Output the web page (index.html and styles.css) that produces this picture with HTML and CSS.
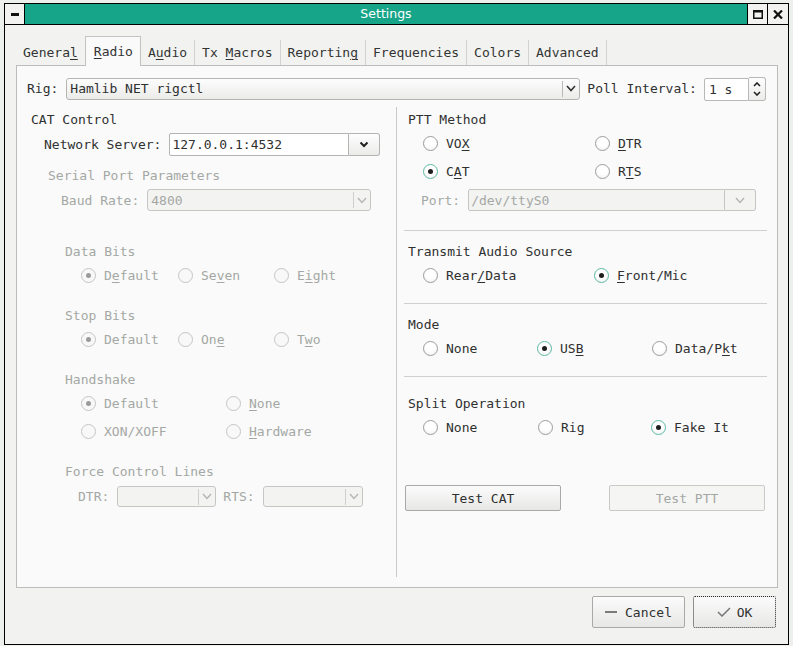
FILE: index.html
```html
<!DOCTYPE html>
<html>
<head>
<meta charset="utf-8">
<title>Settings</title>
<link rel="stylesheet" href="styles.css">
</head>
<body>
<div class="window">
  <div class="titlebar">
    <div class="tbtn tmin"><span class="dash"></span></div>
    <div class="title">Settings</div>
    <div class="tbtn tmax"><svg width="10" height="9" viewBox="0 0 10 9"><rect x="0.75" y="0.75" width="8.5" height="7.5" fill="none" stroke="#111" stroke-width="1.5"/><rect x="0" y="0" width="10" height="2.5" fill="#111"/></svg></div>
    <div class="tbtn tclose"><svg width="10" height="9" viewBox="0 0 10 9"><path d="M1 0.5 L9 8.5 M9 0.5 L1 8.5" stroke="#111" stroke-width="2.2"/></svg></div>
  </div>
  <div class="content">
    <div class="tabs">
      <div class="tab">Genera<u>l</u></div>
      <div class="tab active"><u>R</u>adio</div>
      <div class="tab">A<u>u</u>dio</div>
      <div class="tab">Tx <u>M</u>acros</div>
      <div class="tab">Reportin<u>g</u></div>
      <div class="tab">Frequencies</div>
      <div class="tab">Colors</div>
      <div class="tab">Advanced</div>
    </div>
    <div class="pane">
      <div class="rigrow">
        <span class="txt">Rig:</span>
        <div class="combo rigcombo">
          <span class="val">Hamlib NET rigctl</span>
          <span class="csep"></span>
          <span class="arr"><svg width="10" height="7" viewBox="0 0 10 7"><polyline points="1,1 5,5.5 9,1" fill="none" stroke="#333" stroke-width="1.6"/></svg></span>
        </div>
        <span class="txt polllbl">Poll Interval:</span>
        <div class="spin">
          <span class="spinval">1 s</span>
          <span class="spinarrows">
            <svg width="8" height="5" viewBox="0 0 8 5"><polyline points="1,4 4,1 7,4" fill="none" stroke="#222" stroke-width="1.6"/></svg>
            <svg width="8" height="5" viewBox="0 0 8 5"><polyline points="1,1 4,4 7,1" fill="none" stroke="#222" stroke-width="1.6"/></svg>
          </span>
        </div>
      </div>

      <div class="columns">
        <div class="col colleft">
          <div class="lbl t-cat">CAT Control</div>
          <div class="frow row-net">
            <span class="txt">Network Server:</span>
            <div class="ecombo netcombo">
              <span class="efield">127.0.0.1:4532</span>
              <span class="ebtn"><svg width="10" height="7" viewBox="0 0 10 7"><polyline points="1.5,1.5 5,5 8.5,1.5" fill="none" stroke="#222" stroke-width="2"/></svg></span>
            </div>
          </div>
          <div class="lbl dis t-serial">Serial Port Parameters</div>
          <div class="frow row-baud">
            <span class="txt dis">Baud Rate:</span>
            <div class="combo dcombo baudcombo">
              <span class="val">4800</span>
              <span class="csep"></span>
              <span class="arr"><svg width="10" height="7" viewBox="0 0 10 7"><polyline points="1,1 5,5.5 9,1" fill="none" stroke="#b4b6b4" stroke-width="1.4"/></svg></span>
            </div>
          </div>

          <div class="lbl dis t-grp t-data">Data Bits</div>
          <div class="rrow dis rr-first g-data">
            <span class="radio"><span class="rb on"></span>D<u>e</u>fault</span>
            <span class="radio"><span class="rb"></span>Se<u>v</u>en</span>
            <span class="radio"><span class="rb"></span>E<u>i</u>ght</span>
          </div>

          <div class="lbl dis t-grp">Stop Bits</div>
          <div class="rrow dis rr-first g-data">
            <span class="radio"><span class="rb on"></span>Default</span>
            <span class="radio"><span class="rb"></span>On<u>e</u></span>
            <span class="radio"><span class="rb"></span>T<u>w</u>o</span>
          </div>

          <div class="lbl dis t-grp">Handshake</div>
          <div class="rrow dis rr-first g-hand">
            <span class="radio"><span class="rb on"></span>Default</span>
            <span class="radio"><span class="rb"></span><u>N</u>one</span>
          </div>
          <div class="rrow dis rr-second g-hand">
            <span class="radio"><span class="rb"></span>XON/XOFF</span>
            <span class="radio"><span class="rb"></span><u>H</u>ardware</span>
          </div>

          <div class="lbl dis t-grp">Force Control Lines</div>
          <div class="frow row-dtr">
            <span class="txt dis">DTR:</span>
            <div class="combo dcombo smallcombo">
              <span class="val"></span>
              <span class="csep"></span>
              <span class="arr"><svg width="10" height="7" viewBox="0 0 10 7"><polyline points="1,1 5,5.5 9,1" fill="none" stroke="#b4b6b4" stroke-width="1.4"/></svg></span>
            </div>
            <span class="txt dis rtslbl">RTS:</span>
            <div class="combo dcombo smallcombo rtscombo">
              <span class="val"></span>
              <span class="csep"></span>
              <span class="arr"><svg width="10" height="7" viewBox="0 0 10 7"><polyline points="1,1 5,5.5 9,1" fill="none" stroke="#b4b6b4" stroke-width="1.4"/></svg></span>
            </div>
          </div>
        </div>

        <div class="vdiv"></div>

        <div class="col colright">
          <div class="lbl r-title t-ptt">PTT Method</div>
          <div class="rrow rr-first g-ptt">
            <span class="radio"><span class="rb"></span>VO<u>X</u></span>
            <span class="radio"><span class="rb"></span><u>D</u>TR</span>
          </div>
          <div class="rrow rr-second g-ptt">
            <span class="radio"><span class="rb on"></span>C<u>A</u>T</span>
            <span class="radio"><span class="rb"></span>R<u>T</u>S</span>
          </div>
          <div class="frow row-port">
            <span class="txt dis">Port:</span>
            <div class="ecombo decombo portcombo">
              <span class="efield">/dev/ttyS0</span>
              <span class="ebtn"><svg width="10" height="7" viewBox="0 0 10 7"><polyline points="1,1 5,5.5 9,1" fill="none" stroke="#b4b6b4" stroke-width="1.4"/></svg></span>
            </div>
          </div>
          <div class="hsep sep1"></div>
          <div class="lbl r-title t-aftersep">Transmit Audio Source</div>
          <div class="rrow rr-first g-tas">
            <span class="radio"><span class="rb"></span>Rear<u>/</u>Data</span>
            <span class="radio"><span class="rb on"></span><u>F</u>ront/Mic</span>
          </div>
          <div class="hsep sep2"></div>
          <div class="lbl r-title t-aftersep">Mode</div>
          <div class="rrow rr-first g-mode">
            <span class="radio"><span class="rb"></span>None</span>
            <span class="radio"><span class="rb on"></span>US<u>B</u></span>
            <span class="radio"><span class="rb"></span>Data/P<u>k</u>t</span>
          </div>
          <div class="hsep sep2"></div>
          <div class="lbl r-title t-split">Split Operation</div>
          <div class="rrow rr-first g-split">
            <span class="radio"><span class="rb"></span>None</span>
            <span class="radio"><span class="rb"></span>Rig</span>
            <span class="radio"><span class="rb on"></span>Fake It</span>
          </div>
          <div class="testrow">
            <div class="btn testbtn">Test CAT</div>
            <div class="btn testbtn btndis">Test PTT</div>
          </div>
        </div>
      </div>
    </div>
    <div class="dlgbuttons">
      <div class="btn dlgbtn cancelbtn"><span class="canicon"></span>Cancel</div>
      <div class="btn dlgbtn okbtn"><svg width="14" height="10" viewBox="0 0 14 10"><polyline points="1,5 5,9 13,1" fill="none" stroke="#777" stroke-width="1.5"/></svg>OK</div>
    </div>
  </div>
</div>
</body>
</html>
```
FILE: styles.css
```css
* { box-sizing: border-box; }

html, body {
  margin: 0;
  padding: 0;
  background: #eef0ee;
  width: 793px;
  height: 646px;
  overflow: hidden;
}

body {
  font-family: "DejaVu Sans Mono", "Liberation Mono", monospace;
  font-size: 13px;
  color: #2f3030;
}

u {
  text-decoration: underline;
  text-decoration-thickness: 1px;
  text-underline-offset: 2px;
}

.window {
  margin: 3px 0 0 4px;
  width: 785px;
  height: 642px;
  border: 1px solid #000;
  background: #f2f3f1;
  display: flex;
  flex-direction: column;
}

/* Title bar */
.titlebar {
  height: 21px;
  display: flex;
  border-bottom: 1px solid #000;
  flex: none;
}
.tbtn {
  width: 19px;
  height: 20px;
  background: #f2f2f0;
  display: flex;
  align-items: center;
  justify-content: center;
}
.tmin { border-right: 1px solid #000; width: 20px; }
.tmax { border-left: 1px solid #000; border-right: 1px solid #000; width: 21px; }
.tclose { width: 20px; }
.dash {
  display: block;
  width: 8px;
  height: 3px;
  background: #111;
}
.title {
  flex: 1;
  background: #17a589;
  color: #ffffff;
  font-family: "DejaVu Sans", "Liberation Sans", sans-serif;
  font-size: 12.5px;
  text-align: center;
  line-height: 20px;
}

/* Content */
.content {
  flex: 1;
  padding: 11px 10px 0 11px;
  display: flex;
  flex-direction: column;
}

.tabs {
  display: flex;
  align-items: flex-end;
  height: 29px;
  flex: none;
}
.tab {
  height: 25px;
  line-height: 25px;
  padding: 0 7px;
  border-right: 1px solid #d2d3d1;
  color: #333;
  white-space: nowrap;
}
.tab.active {
  height: 30px;
  line-height: 29px;
  margin-bottom: -1px;
  margin-left: -1px;
  padding: 0 7px 0 8px;
  background: #fafafa;
  border: 1px solid #c3c4c2;
  border-bottom: none;
  position: relative;
  z-index: 1;
}

.pane {
  height: 523px;
  flex: none;
  border: 1px solid #bcbdbb;
  background: #fafafa;
  padding: 11px 10px 0 10px;
}

.txt { white-space: nowrap; }
.dis { color: #a4a8a4; }

/* Rig row */
.rigrow {
  display: flex;
  align-items: center;
  height: 23px;
}
.rigcombo {
  margin-left: 8px;
  width: 514px;
}
.polllbl { margin-left: 7px; }

.combo {
  height: 22px;
  border: 1px solid #b4b5b3;
  border-radius: 3px;
  background: linear-gradient(#fdfdfd, #ebebea);
  display: flex;
  align-items: center;
}
.combo .val {
  flex: 1;
  padding-left: 3px;
  white-space: nowrap;
}
.combo .csep {
  width: 1px;
  height: 16px;
  background: #b9bab8;
}
.combo .arr {
  width: 16px;
  display: flex;
  justify-content: center;
  align-items: center;
}
.dcombo {
  background: #f3f3f2;
  border-color: #c6c7c5;
  color: #a4a8a4;
}
.dcombo .csep { background: #cfd0ce; }

.spin {
  margin-left: 7px;
  width: 62px;
  height: 24px;
  display: flex;
}
.spinval {
  width: 45px;
  height: 23px;
  border: 1px solid #b8b9b7;
  border-radius: 2px 0 0 2px;
  background: #fff;
  padding-left: 4px;
  line-height: 21px;
  margin-top: 1px;
}
.spinarrows {
  width: 17px;
  height: 24px;
  border: 1px solid #b8b9b7;
  border-left: none;
  border-radius: 0 3px 3px 0;
  background: linear-gradient(#fdfdfd, #ececeb);
  display: flex;
  flex-direction: column;
  justify-content: space-around;
  align-items: center;
  padding: 2px 0;
}

/* Columns */
.columns {
  display: flex;
  margin-top: 7px;
  height: 470px;
}
.col { display: flex; flex-direction: column; }
.colleft { width: 369px; }
.vdiv { width: 1px; background: #c9cac8; }
.colright { width: 369px; padding-left: 7px; }

.lbl {
  height: 16px;
  line-height: 18px;
  white-space: nowrap;
}
.frow {
  display: flex;
  align-items: center;
}
.frow .txt { margin-right: 8px; }

.t-cat { margin: 4px 0 0 4px; }
.row-net { margin: 6px 0 0 17px; height: 23px; }
.t-serial { margin: 11px 0 0 21px; }
.row-baud { margin: 6px 0 0 34px; height: 22px; }
.t-data { margin-top: 32px !important; }
.t-grp { margin: 24px 0 0 38px; }
.row-dtr { margin: 7px 0 0 51px; height: 21px; }

.ecombo {
  display: flex;
  height: 23px;
}
.efield {
  flex: 1;
  border: 1px solid #b4b5b3;
  border-radius: 2px 0 0 2px;
  background: #fff;
  padding-left: 2px;
  line-height: 21px;
  white-space: nowrap;
}
.ebtn {
  width: 31px;
  border: 1px solid #b4b5b3;
  border-left: none;
  border-radius: 0 3px 3px 0;
  background: linear-gradient(#fdfdfd, #ebebea);
  display: flex;
  align-items: center;
  justify-content: center;
}
.netcombo { width: 211px; }
.baudcombo { width: 224px; }
.smallcombo { width: 99px; height: 21px; }
.rtscombo { width: 100px; }
.rtslbl { margin-left: 7px; }

.decombo { height: 22px; }
.decombo .efield {
  background: #f3f3f2;
  border-color: #c6c7c5;
  color: #a4a8a4;
}
.decombo .ebtn {
  background: #f3f3f2;
  border-color: #c6c7c5;
}
.portcombo { width: 288px; }

/* Radios */
.rrow {
  display: grid;
  height: 16px;
  align-items: start;
}
.rr-first { margin-top: 8px; }
.rr-second { margin-top: 12px; }
.colleft .rrow { margin-left: 54px; }
.colright .rrow { margin-left: 19px; }

.g-data { grid-template-columns: 97px 96px auto; }
.g-hand { grid-template-columns: 145px auto; }
.g-ptt { grid-template-columns: 172px auto; }
.g-tas { grid-template-columns: 171px auto; }
.g-mode { grid-template-columns: 114px 115px auto; }
.g-split { grid-template-columns: 115px 113px auto; }

.radio {
  display: inline-flex;
  align-items: flex-start;
  white-space: nowrap;
  height: 16px;
  line-height: 18px;
}
.rb {
  width: 15px;
  height: 15px;
  margin-top: 1px;
  border-radius: 50%;
  border: 1px solid #9c9d9b;
  background: radial-gradient(circle at 50% 35%, #ffffff 40%, #efefee 100%);
  margin-right: 8px;
  display: flex;
  align-items: center;
  justify-content: center;
  flex: none;
}
.rb.on { border-color: #5db9a4; }
.rb.on::after {
  content: "";
  width: 5px;
  height: 5px;
  border-radius: 50%;
  background: #1e1e1e;
}
.dis .rb { border-color: #c5c6c4; background: #f8f8f8; }
.dis .rb.on { border-color: #c5c6c4; }
.dis .rb.on::after { background: #9a9c9a; }

/* Right column */
.r-title { margin-left: 4px; }
.t-ptt { margin-top: 4px; }
.row-port { margin: 10px 0 0 17px; height: 22px; }
.hsep { height: 1px; background: #cfd0ce; margin-right: -1px; }
.sep1 { margin-top: 19px; }
.sep2 { margin-top: 20px; }
.t-aftersep { margin-top: 12px; }
.t-split { margin-top: 18px; }

.testrow {
  margin: 50px 1px 0 1px;
  display: flex;
  justify-content: space-between;
}
.btn {
  display: flex;
  align-items: center;
  justify-content: center;
  border: 1px solid #a9aaa8;
  border-radius: 2px;
  background: linear-gradient(#fbfbfb, #e7e7e6);
  white-space: nowrap;
}
.testbtn { width: 156px; height: 26px; }
.btndis {
  border-color: #c9cac8;
  background: #f5f5f4;
  color: #a4a8a4;
}

/* Dialog buttons */
.dlgbuttons {
  display: flex;
  justify-content: flex-end;
  margin-top: 8px;
  padding-right: 2px;
  gap: 8px;
}
.dlgbtn { height: 32px; }
.cancelbtn { width: 93px; }
.okbtn { width: 83px; border: 1px dotted #2a2a2a; }
.canicon {
  display: block;
  width: 12px;
  height: 2px;
  background: #7a7b7a;
  margin-right: 8px;
}
.okbtn svg { margin-right: 6px; }
```
